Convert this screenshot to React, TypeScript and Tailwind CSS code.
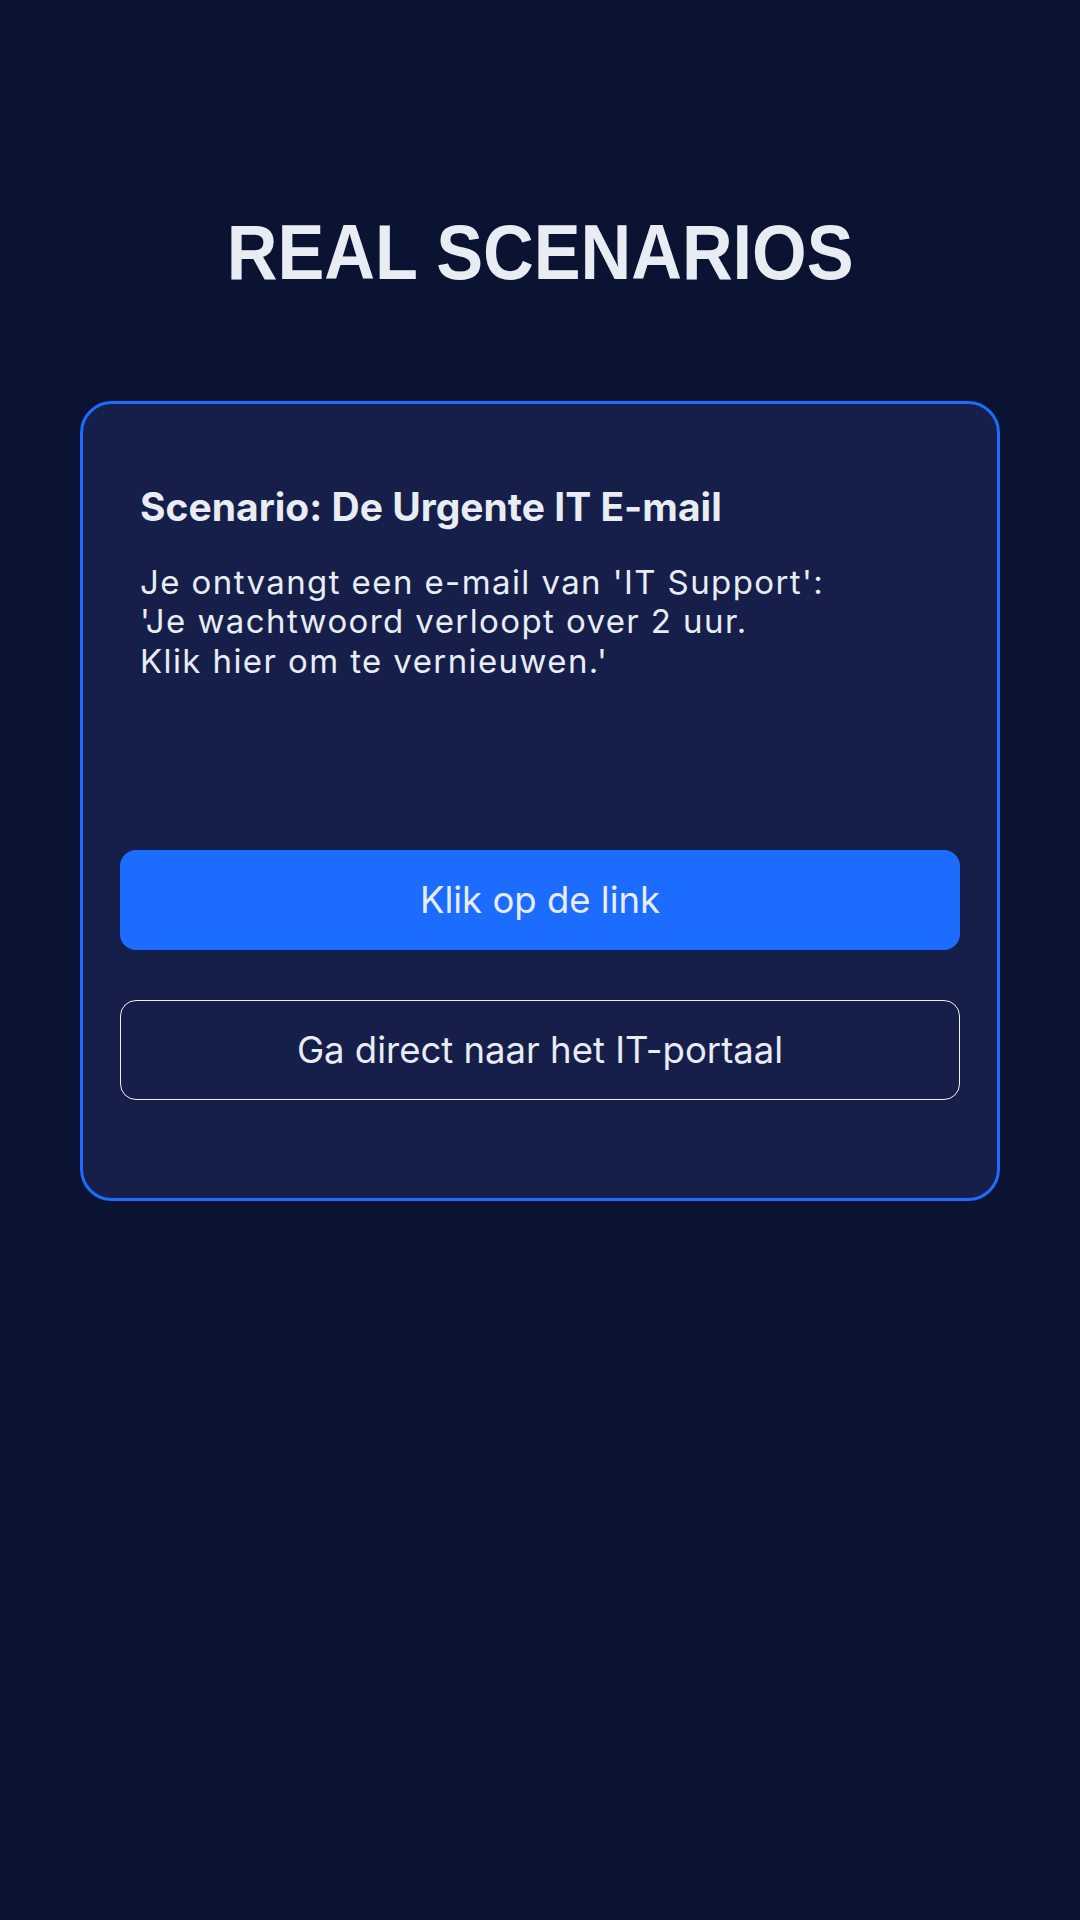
import React from 'react';

const title = "'Liberation Sans', Arial, sans-serif";
const body = "Inter, 'Noto Sans', sans-serif";

export default function App() {
  return (
    <div className="min-h-[1920px] w-[1080px] bg-[#0b1332] flex flex-col items-center">
      {/* Title */}
      <h1
        className="mt-[213px] text-[78px] leading-none font-bold text-[#e8ecf3] scale-x-90"
        style={{ fontFamily: title }}
      >
        REAL SCENARIOS
      </h1>

      {/* Scenario card */}
      <div
        className="mt-[110px] w-[920px] rounded-[32px] border-[3px] border-[#1c6cff] bg-[#161f4a] px-[37px] pt-[80px] pb-[98px]"
        style={{ fontFamily: body }}
      >
        <div className="px-[20px] h-[366px]">
          <h2 className="text-[39px] leading-[1.2] font-bold text-[#e8ecf3]">
            Scenario: De Urgente IT E-mail
          </h2>
          <p className="mt-[32px] text-[33px] leading-[1.2] tracking-[1.4px] text-[#e8ecf3]">
            Je ontvangt een e-mail van 'IT Support':
            <br />
            'Je wachtwoord verloopt over 2 uur.
            <br />
            Klik hier om te vernieuwen.'
          </p>
        </div>

        <div className="flex flex-col gap-[50px]">
          <button className="h-[100px] w-full rounded-2xl bg-[#1b6cff] text-[36.5px] text-[#e8ecf3]">
            Klik op de link
          </button>
          <button className="h-[100px] w-full rounded-2xl border-[1.5px] border-[#eef1f6] bg-transparent text-[36.5px] text-[#e8ecf3]">
            Ga direct naar het IT-portaal
          </button>
        </div>
      </div>
    </div>
  );
}
